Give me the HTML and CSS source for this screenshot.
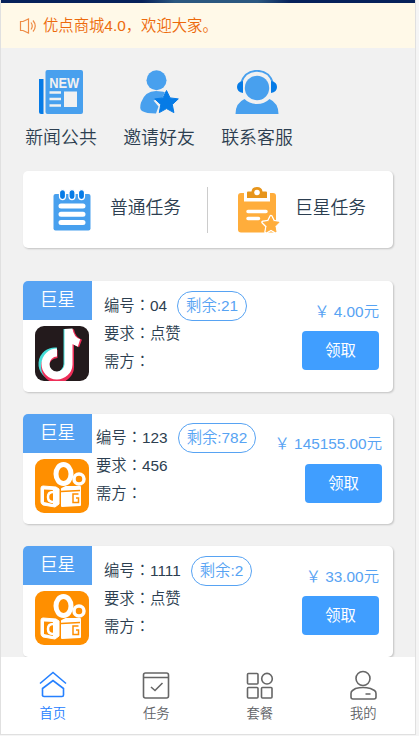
FILE: index.html
```html
<!DOCTYPE html>
<html lang="zh-CN">
<head>
<meta charset="utf-8">
<title>优点商城</title>
<link rel="stylesheet" href="styles.css">
</head>
<body>
<svg class="defs" width="0" height="0" aria-hidden="true">
  <symbol id="kuaishou" viewBox="0 0 54 54">
    <rect width="54" height="54" rx="9" fill="#ff8f00"/>
    <g fill="none" stroke="#fff">
      <ellipse cx="28.500" cy="15" rx="7.500" ry="9.500" stroke-width="5"/>
      <circle cx="44" cy="20" r="5" stroke-width="3.500"/>
    </g>
    <path d="M8 27l13 1 3 2v15l-4 3L8 46q-2-1-2-3V29q0-2 2-2z" fill="#fff" stroke="#fff" stroke-linejoin="round"/>
    <path d="M27 30l4-2h14v18l-18 1z" fill="#fff" stroke="#fff" stroke-width="2" stroke-linejoin="round"/>
    <path d="M9 30.500l9 .500v14l-9-2z" fill="#ff8f00"/>
    <path d="M18 33q-5 0-5 5t5 5" fill="none" stroke="#fff" stroke-width="2.500"/>
    <path d="M26 32.500l19-1M43.500 35H38v8.500h5.500V39H41" fill="none" stroke="#ff8f00" stroke-width="1.500"/>
  </symbol>
  <symbol id="douyin" viewBox="0 0 54 55">
    <rect width="54" height="55" rx="9" fill="#231a1c"/>
    <g fill="none" stroke-width="8">
      <path d="M21.500 25.500A12.500 12.500 0 1 0 32.500 38V3" stroke="#45ddd8"/>
      <path d="M22.500 28A12.500 12.500 0 1 0 35 39.500V4c1 6 4 11 10.500 13.500" stroke="#ee2e58"/>
      <path d="M22 26.500A11.500 11.500 0 1 0 33.500 38.500V3c1 7 4 12 10.500 14" stroke="#fff"/>
    </g>
  </symbol>
</svg>
<div class="app">
  <div class="banner"></div>
  <div class="notice">
    <svg width="18" height="16" viewBox="0 0 18 16" fill="none" stroke="#ee8b45" stroke-width="1.200"><path d="M1.500 3.500v9h2.500l5.500 2.500V1L4 3.500zM12 4.500q2.500 3.500 0 7M14 2.500q4.500 5.500 0 11"/></svg>
    <span>优点商城4.0，欢迎大家。</span>
  </div>
  <div class="shortcuts">
    <div class="shortcut">
      <svg width="44" height="44" viewBox="0 0 44 44"><path d="M0 9h4.500v35H2q-2 0-2-2z" fill="#067be6"/><rect x="6.500" width="37.500" height="44" rx="2" fill="#48a0ee"/><text x="10.200" y="17.500" textLength="30" lengthAdjust="spacingAndGlyphs" class="new">NEW</text><path d="M10.500 22.500H22M10.500 29H22M10.500 35.500H22" stroke="#f1f1f1" stroke-width="2.500"/><rect x="25" y="21.500" width="13" height="15.500" fill="#f1f1f1"/></svg>
      <span>新闻公共</span>
    </div>
    <div class="shortcut">
      <svg width="44" height="44" viewBox="0 0 44 44"><circle cx="19.500" cy="10.200" r="10" fill="#48a0ee"/><path d="M19 43.500q-10 0-14-2.500-3-2-1-8.500Q8 21 19 21q6 0 9 1.500l-3 6-8.500 2 5 6z" fill="#48a0ee"/><path d="M29.500 20.500l3.600 7.400 8.200 1-6 5.600 1.600 8.100-7.400-4-7.200 4 1.500-8.100-6-5.600 8.200-1z" fill="#067be6" stroke="#067be6" stroke-width="1" stroke-linejoin="round"/></svg>
      <span>邀请好友</span>
    </div>
    <div class="shortcut">
      <svg width="44" height="44" viewBox="0 0 44 44"><path d="M6 13Q10 .800 22 .800T38 13" fill="none" stroke="#48a0ee" stroke-width="1.800"/><path d="M8 11v12q-6-1-6-6t6-6zM36 11v12q6-1 6-6t-6-6z" fill="#067be6"/><circle cx="22" cy="18" r="12.200" fill="#48a0ee"/><path d="M.500 44q0-11 9-15 5 5 12.500 5t12.500-5q9 4 9 15z" fill="#48a0ee"/></svg>
      <span>联系客服</span>
    </div>
  </div>
  <div class="panel">
    <div class="entry plain">
      <svg width="38" height="42" viewBox="0 0 38 42"><rect x=".500" y="5" width="37" height="36.500" rx="2" fill="#48a0ee"/><g fill="#067be6" stroke="#fff" stroke-width="1.200"><rect x="6.500" y="0.600" width="6" height="10" rx="3"/><rect x="16" y="0.600" width="6" height="10" rx="3"/><rect x="25.500" y="0.600" width="6" height="10" rx="3"/></g><path d="M8 17h22M8 25.300h22M8 33.500h22" stroke="#fff" stroke-width="5" stroke-linecap="round"/></svg>
      <span>普通任务</span>
    </div>
    <div class="entry star">
      <svg width="42" height="46" viewBox="0 0 42 46"><rect y="6" width="38" height="39.500" rx="3" fill="#ffad3b"/><path d="M6 5h26v9.500H6z" fill="#fff"/><path d="M9 11V5.500q0-1 1-1h3.500q.5-4.500 5.500-4.500t5.500 4.500H28q1 0 1 1V11z" fill="#e7951b"/><circle cx="19" cy="5.500" r="2.800" fill="#fff"/><path d="M10 24.500h18M10 31.500h10.500" stroke="#fff" stroke-width="3.500" stroke-linecap="round"/><path d="M33 29.500l2.500 5 5.500.800-4 4 1 5.700-5-2.700-5 2.700 1-5.700-4-4 5.500-.800z" fill="#fff" stroke="#fff" stroke-width="3.500" stroke-linejoin="round"/><path d="M33 29.500l2.500 5 5.500.800-4 4 1 5.700-5-2.700-5 2.700 1-5.700-4-4 5.500-.800z" fill="#ffad3b" stroke="#ffad3b" stroke-linejoin="round"/></svg>
      <span>巨星任务</span>
    </div>
  </div>
  <div class="tasks">
    <div class="task">
      <div class="side"><div class="tag">巨星</div><svg class="logo" width="54" height="55"><use href="#douyin"/></svg></div>
      <div class="info"><div>编号<i lang="zh-TW">：</i>04<span class="left">剩余:21</span></div><div>要求<i lang="zh-TW">：</i>点赞</div><div>需方<i lang="zh-TW">：</i></div></div>
      <div class="action"><div class="price">￥ 4.00元</div><button>领取</button></div>
    </div>
    <div class="task wide">
      <div class="side"><div class="tag">巨星</div><svg class="logo" width="54" height="54"><use href="#kuaishou"/></svg></div>
      <div class="info"><div>编号<i lang="zh-TW">：</i>123<span class="left">剩余:782</span></div><div>要求<i lang="zh-TW">：</i>456</div><div>需方<i lang="zh-TW">：</i></div></div>
      <div class="action"><div class="price">￥ 145155.00元</div><button>领取</button></div>
    </div>
    <div class="task">
      <div class="side"><div class="tag">巨星</div><svg class="logo" width="54" height="54"><use href="#kuaishou"/></svg></div>
      <div class="info"><div>编号<i lang="zh-TW">：</i>1111<span class="left">剩余:2</span></div><div>要求<i lang="zh-TW">：</i>点赞</div><div>需方<i lang="zh-TW">：</i></div></div>
      <div class="action"><div class="price">￥ 33.00元</div><button>领取</button></div>
    </div>
  </div>
  <div class="tabs">
    <div class="tab active"><svg width="30" height="30" viewBox="0 0 30 30"><path d="M2 13.500L15 2.500l13 11M4.500 26V18.500L15 10.500l10.500 8V25q0 1.500-1.500 1.500H6q-1.500 0-1.500-1.500"/></svg><span>首页</span></div>
    <div class="tab"><svg width="30" height="30" viewBox="0 0 30 30"><rect x="2.500" y="3" width="25" height="25" rx="2"/><path d="M2.500 7.500h25M10 17l4 3.500 7.500-7.500"/></svg><span>任务</span></div>
    <div class="tab"><svg width="30" height="30" viewBox="0 0 30 30"><rect x="2.500" y="3.500" width="10.500" height="10.500" rx="1"/><circle cx="22" cy="8.700" r="5.300"/><rect x="2.500" y="17.500" width="10.500" height="10.500" rx="1"/><rect x="16.500" y="17.500" width="10.500" height="10.500" rx="1"/></svg><span>套餐</span></div>
    <div class="tab"><svg width="30" height="30" viewBox="0 0 30 30"><circle cx="15" cy="8.500" r="7"/><path d="M7.500 18.500q7.500-2 15 0l4 2q1.500 1 1.500 3V27q0 2-2 2H5q-2 0-2-2v-3.500q0-2 1.500-3zM17.500 24h5"/></svg><span>我的</span></div>
  </div>
</div>
</body>
</html>
```
FILE: styles.css
```css
* { box-sizing: border-box; }
body {
  margin: 0;
  background: #f5f5f5;
  color: #2c3e50;
  font-family: "Liberation Sans", "Noto Sans CJK SC", sans-serif;
  font-weight: 350;
  font-size: 15.35px;
}
svg { display: block; flex: none; }
.defs { position: absolute; }
.app {
  width: 416px;
  height: 735px;
  display: flex;
  flex-direction: column;
  background: #f1f1f1;
  border: 1px solid #e0e0e0;
  border-top: 0;
  overflow: hidden;
}
.banner {
  height: 3px;
  flex: none;
  background: linear-gradient(90deg, #06215a 0 34%, #2b5880 42% 62%, #06215a 70%);
}
.notice {
  height: 45px;
  flex: none;
  display: flex;
  align-items: center;
  gap: 6px;
  padding-left: 18px;
  background: #fff9e8;
  color: #ed6a0c;
}
.notice span { margin-top: -4px; }
.shortcuts { display: flex; padding: 22px 0 0 11px; height: 123px; flex: none; }
.shortcut {
  width: 98px;
  display: flex;
  flex-direction: column;
  align-items: center;
  gap: 10px;
  font-size: 17.9px;
  line-height: 28px;
}
.new { font: bold 14px "Liberation Sans", sans-serif; fill: #f1f1f1; }
.panel {
  height: 77px;
  flex: none;
  margin: 0 22px;
  display: flex;
  align-items: center;
  background: #fff;
  border-radius: 5px;
  box-shadow: 1px 1px 2px rgba(0, 0, 0, .2);
  font-size: 17.8px;
}
.entry { height: 46px; display: flex; align-items: center; }
.plain { width: 185px; padding-left: 30px; gap: 19px; border-right: 1px solid #ccc; }
.star { padding-left: 30px; gap: 15px; }
.entry span { margin-top: -8px; }
.tasks {
  flex: 1;
  min-height: 0;
  margin-top: 33px;
  padding: 0 22px;
  display: flex;
  flex-direction: column;
  gap: 22px;
}
.task {
  height: 111px;
  flex: none;
  display: flex;
  background: #fff;
  border-radius: 5px;
  box-shadow: 1px 1px 2px rgba(0, 0, 0, .2);
}
.task.wide { height: 110px; }
.side { width: 69px; flex: none; }
.tag {
  height: 39px;
  line-height: 39px;
  text-align: center;
  color: #fff;
  background: #57a3f3;
  border-radius: 5px 0 0;
  font-size: 17.8px;
}
.logo { margin: 6px 0 0 12px; }
.info { padding: 9px 0 0 12px; line-height: 28px; white-space: nowrap; }
.wide .info { padding: 8px 0 0 4px; }
.info i { font-style: normal; font-family: "Noto Sans CJK TC", sans-serif; }
.info div { height: 28px; }
.left {
  display: inline-block;
  height: 30px;
  margin: 1px 0 0 10px;
  padding: 0 8px;
  vertical-align: top;
  border: 1px solid #57a3f3;
  border-radius: 15px;
  color: #57a3f3;
}
.action {
  margin-left: auto;
  padding: 18px 14px 0 0;
  display: flex;
  flex-direction: column;
  align-items: flex-end;
  white-space: nowrap;
}
.wide .action { padding: 17px 11px 0 0; }
.price { height: 32px; line-height: 25px; color: #57a3f3; }
.wide .price { height: 33px; }
button {
  width: 77px;
  height: 39px;
  padding: 0 0 3px;
  border: 0;
  border-radius: 4px;
  background: #409eff;
  color: #fff;
  font: 400 15.35px "Liberation Sans", "Noto Sans CJK SC", sans-serif;
}
.tabs {
  height: 77px;
  flex: none;
  display: flex;
  background: #fff;
}
.tab {
  flex: 1;
  display: flex;
  flex-direction: column;
  align-items: center;
  padding-top: 13px;
  color: #606266;
  font-size: 13.3px;
  line-height: 28px;
}
.tab svg { fill: none; stroke: #666; stroke-width: 1.600; }
.active { color: #2580ff; }
.active svg { stroke: #2580ff; }
```
